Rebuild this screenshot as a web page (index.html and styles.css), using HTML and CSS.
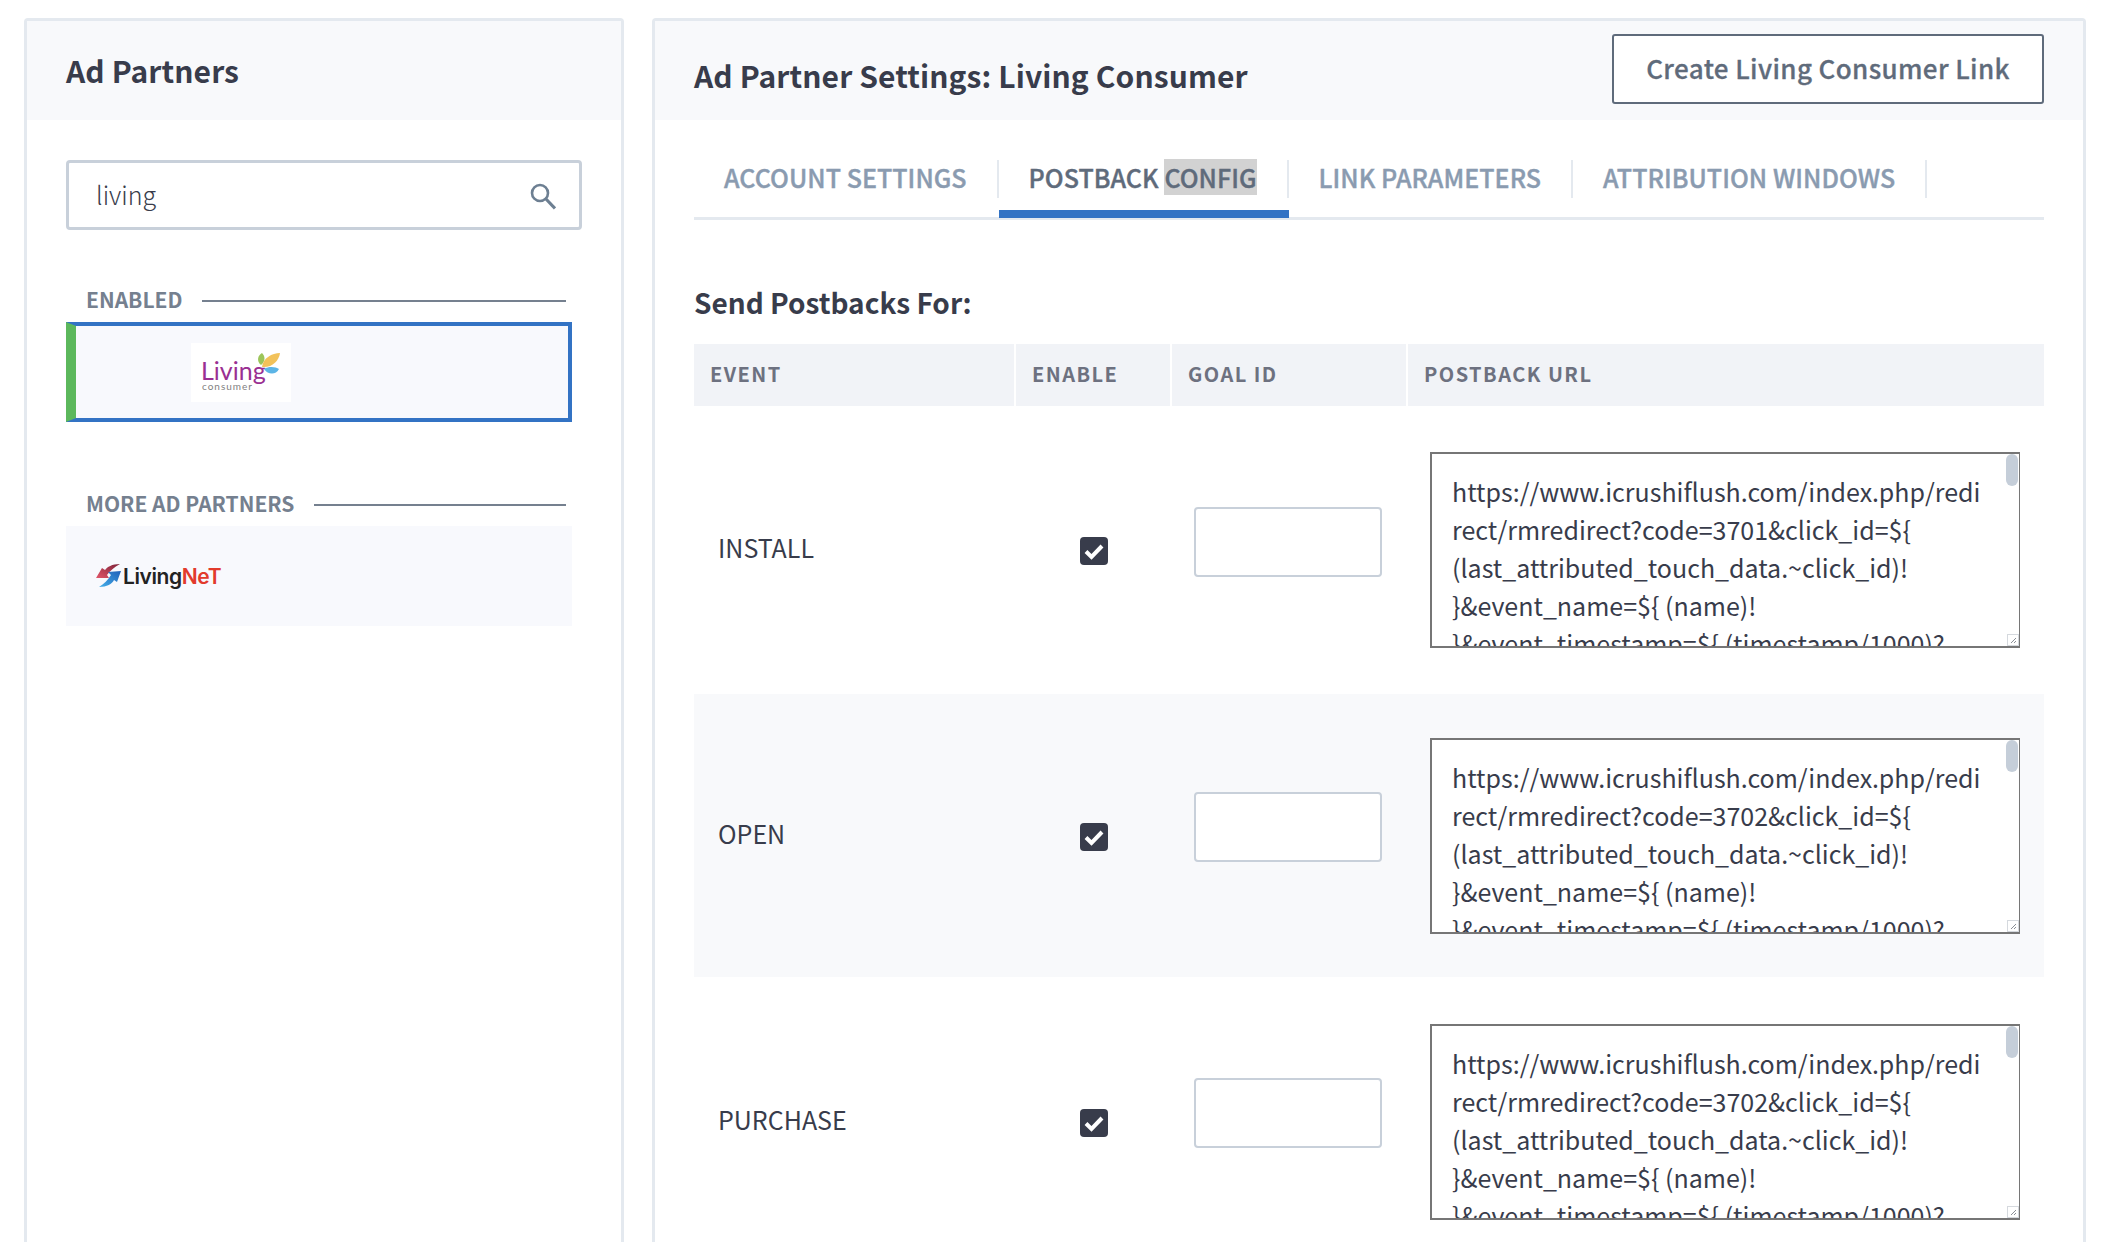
FILE: index.html
```html
<!DOCTYPE html>
<html lang="en">
<head>
<meta charset="UTF-8">
<title>Ad Partner Settings</title>
<link rel="stylesheet" href="styles.css">
</head>
<body>
<div class="page">
  <aside class="panel side">
    <div class="panel-head side-head"><h2>Ad Partners</h2></div>
    <div class="side-body">
      <div class="search">
        <input class="search-input" type="text" value="living">
        <svg class="search-icon" viewBox="0 0 26 27" width="26" height="27"><circle cx="10" cy="10" r="8" fill="none" stroke="#6d7f92" stroke-width="2.6"/><path d="M16 16 L25 25.5" stroke="#6d7f92" stroke-width="3.2" fill="none"/></svg>
      </div>
      <div class="group-label enabled-label"><span>ENABLED</span><i></i></div>
      <div class="partner partner-on">
        <svg class="logo-living" viewBox="0 0 100 59" width="100" height="59">
          <rect width="100" height="59" fill="#fff"/>
          <text x="10" y="37" class="lc-word">Living</text>
          <text x="11" y="47" class="lc-sub">consumer</text>
          <path d="M70 22 C65 18 67 12 71 10 C74 13 75 18 70 22Z" fill="#9cc55a"/>
          <path d="M71 24 C72 15 81 10 89 10 C88 18 81 25 71 24Z" fill="#f2c25a"/>
          <path d="M73 26 C78 23 85 24 88 26 C85 32 77 32 73 26Z" fill="#5cb5e6"/>
        </svg>
      </div>
      <div class="group-label more-label"><span>MORE AD PARTNERS</span><i></i></div>
      <div class="partner partner-off">
        <svg class="logo-net" viewBox="0 0 140 34" width="140" height="34">
          <defs>
            <linearGradient id="netRed" x1="1" y1="0" x2="0" y2="1"><stop offset="0" stop-color="#7d2238"/><stop offset="1" stop-color="#e2566a"/></linearGradient>
            <linearGradient id="netBlue" x1="1" y1="0" x2="0" y2="1"><stop offset="0" stop-color="#1f5fb8"/><stop offset="1" stop-color="#45b0ea"/></linearGradient>
          </defs>
          <path d="M26 5 C18 5 13 8 11 11 L8 9 L2 19 L15 19 L13 16 C16 12 20 8 26 5Z" fill="url(#netRed)"/>
          <path d="M5 28 C13 28 18 25 20 21 L23 23 L27 12 L14 13 L17 16 C14 21 10 25 5 28Z" fill="url(#netBlue)"/>
          <text x="29" y="25" class="ln-word">Living<tspan fill="#e23a2c">NeT</tspan></text>
        </svg>
      </div>
    </div>
  </aside>

  <main class="panel content">
    <div class="panel-head content-head">
      <h2>Ad Partner Settings: Living Consumer</h2>
      <a class="btn-outline">Create Living Consumer Link</a>
    </div>
    <div class="content-body">
      <nav class="tabs">
        <a class="tab"><span>ACCOUNT SETTINGS</span></a>
        <a class="tab active"><span>POSTBACK <b class="sel">CONFIG</b></span></a>
        <a class="tab"><span>LINK PARAMETERS</span></a>
        <a class="tab"><span>ATTRIBUTION WINDOWS</span></a>
      </nav>
      <h3 class="section-title">Send Postbacks For:</h3>
      <div class="grid-row grid-head">
        <div>EVENT</div>
        <div>ENABLE</div>
        <div>GOAL ID</div>
        <div>POSTBACK URL</div>
      </div>

      <div class="grid-row event-row first-row">
        <div class="event-name">INSTALL</div>
        <div class="check-cell"><span class="check"><svg viewBox="0 0 28 28" width="28" height="28"><path d="M6 14.5 L11.5 20 L22 9" fill="none" stroke="#fff" stroke-width="4"/></svg></span></div>
        <div class="goal-cell"><input class="goal" type="text"></div>
        <div class="url-cell">
          <textarea class="url" readonly>https://www.icrushiflush.com/index.php/redi
rect/rmredirect?code=3701&amp;click_id=${
(last_attributed_touch_data.~click_id)!
}&amp;event_name=${ (name)!
}&amp;event_timestamp=${ (timestamp/1000)?</textarea>
          <span class="thumb"></span><span class="grip"><svg viewBox="0 0 10 10" width="10" height="10"><path d="M3 8 L8 3 M6 8 L8 6" stroke="#8a8f96" stroke-width="1"/></svg></span>
        </div>
      </div>

      <div class="grid-row event-row shaded">
        <div class="event-name">OPEN</div>
        <div class="check-cell"><span class="check"><svg viewBox="0 0 28 28" width="28" height="28"><path d="M6 14.5 L11.5 20 L22 9" fill="none" stroke="#fff" stroke-width="4"/></svg></span></div>
        <div class="goal-cell"><input class="goal" type="text"></div>
        <div class="url-cell">
          <textarea class="url" readonly>https://www.icrushiflush.com/index.php/redi
rect/rmredirect?code=3702&amp;click_id=${
(last_attributed_touch_data.~click_id)!
}&amp;event_name=${ (name)!
}&amp;event_timestamp=${ (timestamp/1000)?</textarea>
          <span class="thumb"></span><span class="grip"><svg viewBox="0 0 10 10" width="10" height="10"><path d="M3 8 L8 3 M6 8 L8 6" stroke="#8a8f96" stroke-width="1"/></svg></span>
        </div>
      </div>

      <div class="grid-row event-row">
        <div class="event-name">PURCHASE</div>
        <div class="check-cell"><span class="check"><svg viewBox="0 0 28 28" width="28" height="28"><path d="M6 14.5 L11.5 20 L22 9" fill="none" stroke="#fff" stroke-width="4"/></svg></span></div>
        <div class="goal-cell"><input class="goal" type="text"></div>
        <div class="url-cell">
          <textarea class="url" readonly>https://www.icrushiflush.com/index.php/redi
rect/rmredirect?code=3702&amp;click_id=${
(last_attributed_touch_data.~click_id)!
}&amp;event_name=${ (name)!
}&amp;event_timestamp=${ (timestamp/1000)?</textarea>
          <span class="thumb"></span><span class="grip"><svg viewBox="0 0 10 10" width="10" height="10"><path d="M3 8 L8 3 M6 8 L8 6" stroke="#8a8f96" stroke-width="1"/></svg></span>
        </div>
      </div>
    </div>
  </main>
</div>
</body>
</html>
```
FILE: styles.css
```css
* {
  box-sizing: border-box;
}
html, body {
  margin: 0;
  height: 100%;
  overflow: hidden;
  background: #fff;
}
body {
  font-family: "Noto Sans CJK SC", "Source Sans Pro", "Open Sans", sans-serif;
  color: #383c4b;
}
.page {
  display: flex;
  gap: 28px;
  padding: 18px 0 0 24px;
  height: 1300px;
}
.panel {
  border: 3px solid #e4e9ef;
  border-bottom: none;
  border-radius: 4px 4px 0 0;
  background: #fff;
}
.side {
  width: 600px;
}
.content {
  width: 1434px;
}
.panel-head {
  background: #f8f9fb;
  height: 99px;
}
.panel-head h2 {
  margin: 0;
  font-size: 30px;
  font-weight: 700;
  color: #383c4b;
  letter-spacing: 0.1px;
}
.side-head {
  display: flex;
  align-items: center;
  padding: 0 0 2px 39px;
}
.side-body {
  padding: 40px 0 0 39px;
}
.search {
  position: relative;
  width: 516px;
}
.search-input {
  display: block;
  width: 100%;
  height: 70px;
  border: 3px solid #c8d0da;
  border-radius: 4px;
  padding: 0 27px 3px;
  font: 300 25px "Noto Sans CJK SC", sans-serif;
  color: #383c4b;
  outline: none;
}
.search-icon {
  position: absolute;
  right: 26px;
  top: 23px;
}
.group-label {
  display: flex;
  align-items: center;
  gap: 20px;
  width: 480px;
  margin-left: 20px;
  height: 28px;
  font-size: 21px;
  font-weight: 700;
  color: #75808f;
}
.group-label span {
  position: relative;
  top: -2px;
}
.group-label i {
  flex: 1;
  height: 2px;
  background: #75808f;
}
.enabled-label {
  margin-top: 57px;
  margin-bottom: 7px;
}
.more-label {
  margin-top: 69px;
  margin-bottom: 7px;
}
.partner {
  width: 506px;
  height: 100px;
  background: #f8f9fd;
  display: flex;
  align-items: center;
}
.partner-on {
  border: 4px solid #3373c4;
  border-left: 10px solid #5cb85c;
  padding-left: 115px;
}
.partner-off {
  padding-left: 28px;
}
.logo-living, .logo-net {
  display: block;
}
.lc-word {
  font: 400 25px "Lato", sans-serif;
  fill: #9a2f92;
}
.lc-sub {
  font: 400 10px "Lato", sans-serif;
  fill: #7f7f7f;
  letter-spacing: 1px;
}
.ln-word {
  font: 600 21px "Inter", sans-serif;
  fill: #222;
  letter-spacing: -0.4px;
}
.content-head {
  display: flex;
  align-items: flex-start;
  justify-content: space-between;
  padding: 13px 39px 0 39px;
}
.content-head h2 {
  margin-top: 19px;
}
.btn-outline {
  display: flex;
  align-items: center;
  justify-content: center;
  width: 432px;
  height: 70px;
  padding-bottom: 4px;
  background: #fff;
  border: 2px solid #5f6b7b;
  border-radius: 3px;
  font-size: 26px;
  font-weight: 500;
  color: #5f6b7b;
  letter-spacing: 0.37px;
  -webkit-text-stroke: 0.3px #5f6b7b;
}
.content-body {
  padding: 40px 39px 0 39px;
}
.tabs {
  display: flex;
  border-bottom: 3px solid #e4e9ef;
  height: 60px;
}
.tab {
  height: 58px;
  font-size: 25px;
  font-weight: 500;
  color: #8a9bb0;
  white-space: nowrap;
  letter-spacing: 0.05px;
  -webkit-text-stroke: 0.4px;
}
.tab span {
  display: flex;
  align-items: center;
  height: 38px;
  padding: 0 30px 5px 30px;
  border-right: 2px solid #e4e9ef;
  white-space: pre;
}
.tab.active {
  color: #5f6b7b;
  border-bottom: 8px solid #3373c4;
}
.sel {
  font-weight: inherit;
  background: #d2d2d2;
}
.section-title {
  margin: 62px 0 22px;
  height: 40px;
  line-height: 40px;
  font-size: 28px;
  font-weight: 700;
  color: #383c4b;
}
.grid-row {
  display: grid;
  grid-template-columns: 322px 156px 236px 1fr;
  width: 1350px;
}
.grid-head {
  height: 62px;
  font-size: 20px;
  font-weight: 700;
  color: #6d7180;
  letter-spacing: 1.45px;
}
.grid-head div {
  display: flex;
  align-items: center;
  padding: 0 0 3px 16px;
  background: #f1f3f7;
  border-right: 2px solid #fff;
}
.grid-head div:last-child {
  border-right: none;
}
.event-row {
  height: 289px;
  align-items: center;
}
.first-row {
  height: 288px;
}
.shaded {
  height: 283px;
  background: #f8f9fb;
}
.event-name {
  padding: 0 0 6px 24px;
  font-size: 25px;
  color: #383c4b;
}
.check-cell {
  padding-left: 64px;
}
.check {
  display: block;
  width: 28px;
  height: 28px;
  border-radius: 4px;
  background: #383c4b;
  margin-top: 2px;
}
.check svg {
  display: block;
}
.goal-cell {
  padding-left: 22px;
}
.goal {
  display: block;
  width: 188px;
  height: 70px;
  margin-top: -17px;
  border: 2px solid #c8d0da;
  border-radius: 4px;
  background: #fff;
}
.url-cell {
  position: relative;
  width: 590px;
  margin-left: 22px;
  height: 196px;
}
.url {
  display: block;
  width: 100%;
  height: 100%;
  border: 2px solid #767676;
  border-right-width: 1px;
  background: #fff;
  padding: 18px 20px 0 20px;
  font: 400 25px/38px "Noto Sans CJK SC", sans-serif;
  color: #383c4b;
  white-space: pre;
  overflow: hidden;
  resize: none;
  outline: none;
}
.thumb {
  position: absolute;
  right: 2px;
  top: 2px;
  width: 12px;
  height: 32px;
  border-radius: 6px;
  background: #c5ced9;
}
.grip {
  position: absolute;
  right: 1px;
  bottom: 2px;
  width: 12px;
  height: 12px;
  background: #fff;
  border: 1px solid #d5d9de;
}
.grip svg {
  display: block;
}
```
